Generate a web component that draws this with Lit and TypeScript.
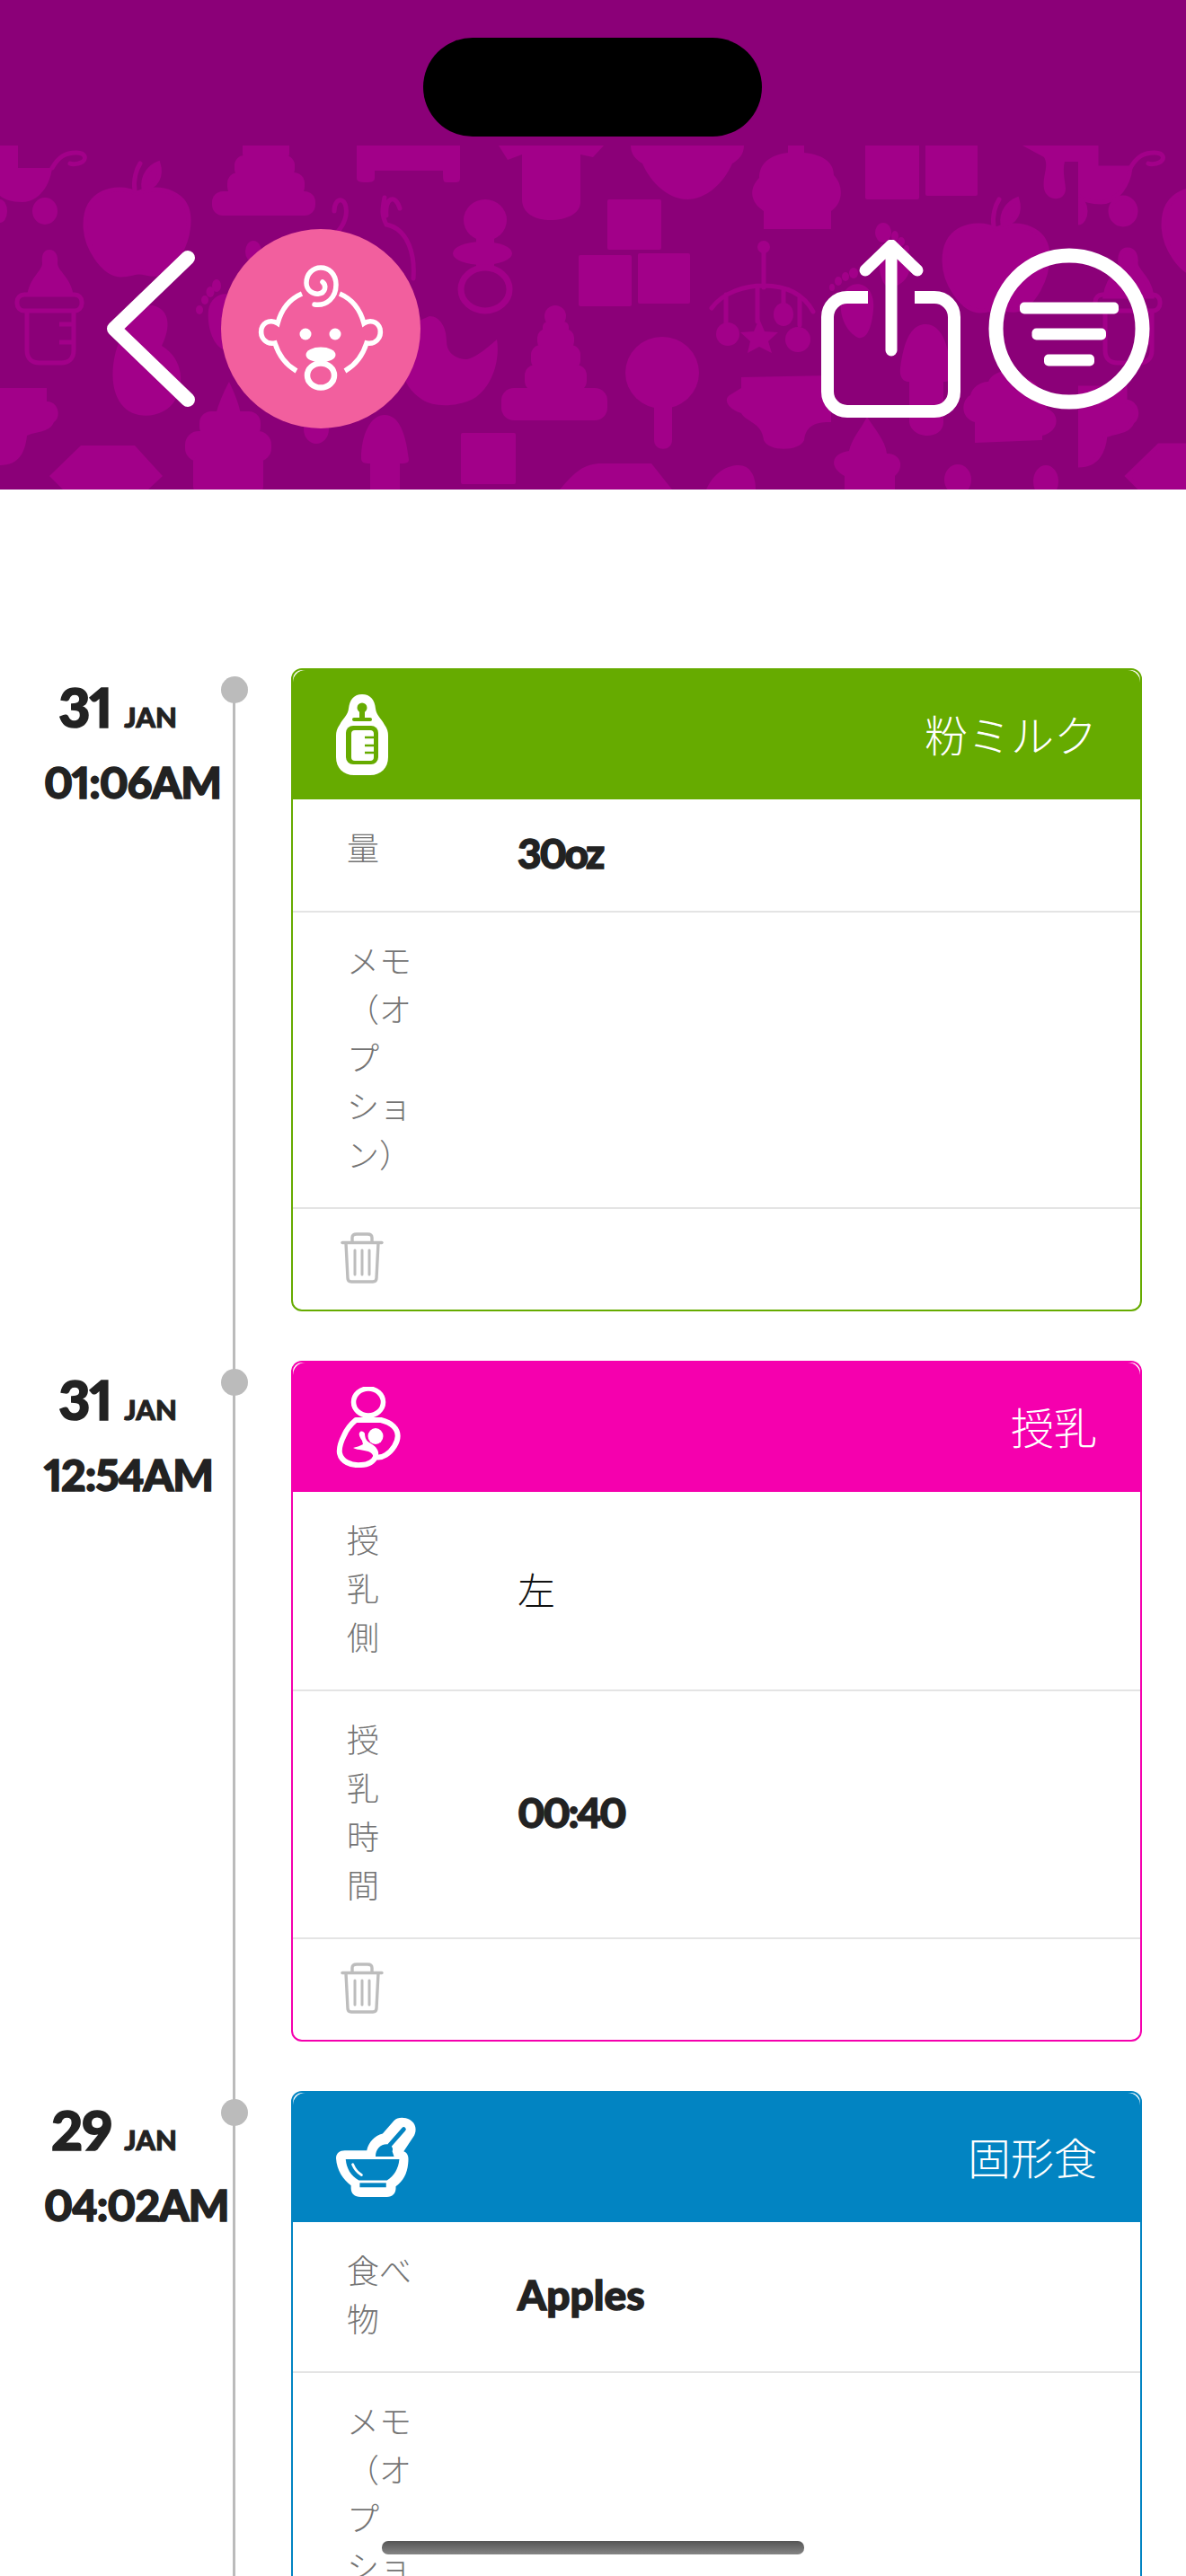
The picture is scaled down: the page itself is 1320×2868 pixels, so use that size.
import { LitElement, html, css, svg } from "lit";
import { customElement } from "lit/decorators.js";

const pattern = svg`
  <path d="M0 162H20V187H58C56 205 44 225 25 225C12 225 5 222 0 218Z"/>
  <path d="M58 187C65 175 72 170 85 170C96 170 97 178 90 181C86 183 80 183 78 182" fill="none" stroke-width="7" stroke-linecap="round"/>
  <ellipse cx="50" cy="235" rx="14" ry="15"/><ellipse cx="0" cy="235" rx="8" ry="13"/>
  <g id="apple">
    <path d="M152 215C130 205 95 212 95 250C95 275 115 306 135 306C145 306 148 303 155 303C162 303 165 306 175 305C195 300 210 270 210 245C210 215 180 205 152 215Z"/>
    <path d="M150 212C148 200 152 188 156 182" fill="none" stroke-width="5" stroke-linecap="round"/>
    <path d="M160 210C158 195 168 185 176 182C180 195 175 208 160 210Z"/>
  </g>
  <use href="#apple" transform="translate(956 40)"/>
  <rect x="270" y="155" width="52" height="24" rx="8"/><rect x="261" y="173" width="67" height="26" rx="11"/><rect x="253" y="192" width="86" height="28" rx="12"/><rect x="236" y="213" width="115" height="27" rx="12"/>
  <path d="M397 162H512V198C512 203 510 203 505 203H497C493 203 493 200 493 190H417V198C417 203 412 203 405 203C398 203 397 200 397 198Z"/>
  <path d="M555 162H672L660 175L646 172V225C646 238 630 245 613 245C596 245 581 238 581 222V172L565 178Z"/>
  <ellipse cx="540" cy="245" rx="24" ry="23"/><ellipse cx="537" cy="282" rx="33" ry="13"/>
  <path d="M530 262H550V300H530Z"/>
  <ellipse cx="540" cy="322" rx="27" ry="24" fill="none" stroke-width="7"/>
  <path d="M55 278C48 278 46 285 47 293C47 302 33 308 30 330H82C79 308 64 302 64 293C65 285 62 278 55 278Z"/>
  <rect x="19" y="328" width="72" height="18" rx="8" fill="none" stroke-width="5"/>
  <path d="M30 346V390C30 400 36 404 44 404H68C76 404 82 400 82 390V346M66 361H80M66 381H80" fill="none" stroke-width="5"/>
  <ellipse cx="222" cy="345" rx="4" ry="5"/><ellipse cx="228" cy="334" rx="4" ry="5"/><ellipse cx="234" cy="325" rx="4.5" ry="6"/><ellipse cx="241" cy="318" rx="5" ry="7"/><ellipse cx="282" cy="280" rx="9" ry="12"/>
  <path d="M232 345C235 325 260 320 265 340C270 360 262 390 252 390C238 388 230 365 232 345Z"/>
  <g fill="none" stroke-width="5" stroke-linecap="round">
    <path d="M372 235C372 218 388 218 385 240C382 255 370 265 360 270"/>
    <path d="M430 240C428 220 440 215 445 232M428 220C425 235 425 240 430 250C455 255 462 285 460 310"/>
  </g>
  <path d="M170 340C190 345 190 365 180 385C205 400 205 430 195 445C185 465 150 470 135 450C120 430 125 395 135 375C135 360 150 340 170 340Z"/>
  <path d="M478 352C490 352 497 365 497 380C497 395 510 400 520 400C530 398 545 385 553 378C556 395 552 425 530 442C515 452 485 455 470 445C455 435 445 420 450 400L460 360Z"/>
  <circle cx="618" cy="352" r="12"/><rect x="604" y="358" width="29" height="14" rx="6"/><rect x="598" y="366" width="41" height="24" rx="10"/><rect x="591" y="384" width="55" height="28" rx="11"/><rect x="584" y="406" width="69" height="30" rx="12"/><rect x="558" y="432" width="118" height="36" rx="14"/>
  <rect x="644" y="284" width="59" height="57" rx="2"/><rect x="710" y="282" width="58" height="56" rx="2"/><rect x="676" y="222" width="60" height="56" rx="2"/>
  <path d="M0 432H52V447C66 447 68 465 60 470C55 482 40 480 30 485C28 505 20 518 0 518Z"/>
  <path d="M90 496H150L181 530L165 545H70L55 530Z"/>
  <path d="M255 425C262 440 266 450 268 462H240C243 450 248 438 255 425Z"/><rect x="222" y="458" width="68" height="30" rx="13"/><rect x="206" y="480" width="96" height="34" rx="15"/><rect x="215" y="508" width="78" height="40" rx="6"/>
  <ellipse cx="352" cy="478" rx="14" ry="16"/>
  <path d="M428 462C445 462 452 485 455 512C455 516 450 516 445 516V545H412V516C405 516 402 515 402 510C402 485 412 462 428 462Z"/>
  <rect x="513" y="482" width="61" height="57" rx="2"/>
  <path d="M623 545C640 525 650 516 670 516H725L748 545Z"/>
  <ellipse cx="737" cy="415" rx="41" ry="40"/><path d="M728 445H748V490C748 503 728 503 728 490Z"/>
  <path d="M702 162H828C828 172 822 178 815 182C805 205 785 222 765 222C745 222 725 205 715 182C708 178 702 172 702 162Z"/>
  <path d="M877 162H895V170C915 172 928 180 928 195C938 205 940 225 925 235V255H850V235C835 225 833 210 845 198C845 180 860 172 877 170Z"/>
  <rect x="963" y="160" width="60" height="62" rx="2"/><rect x="1030" y="160" width="58" height="58" rx="2"/>
  <circle cx="850" cy="275" r="7"/>
  <g fill="none" stroke-width="5" stroke-linecap="round">
    <path d="M850 275V320M792 343C805 325 830 318 850 318C872 318 893 325 905 347M808 328V360M843 320V358M872 322V342M890 332V362"/>
  </g>
  <circle cx="810" cy="372" r="13"/><path d="M845 355L851 369L866 370L855 380L859 393L845 386L832 393L835 380L824 370L839 369Z"/>
  <ellipse cx="872" cy="350" rx="11" ry="13"/><ellipse cx="888" cy="378" rx="14" ry="14"/>
  <ellipse cx="983" cy="259" rx="9" ry="11"/><ellipse cx="996" cy="263" rx="4" ry="6"/><ellipse cx="1003" cy="269" rx="4" ry="5"/><ellipse cx="1009" cy="277" rx="3" ry="4"/>
  <path d="M980 272C995 270 1012 285 1012 300C1012 310 1000 320 990 320C980 320 975 290 980 272Z"/>
  <ellipse cx="926" cy="320" rx="3" ry="4"/><ellipse cx="933" cy="313" rx="4" ry="5"/><ellipse cx="941" cy="308" rx="4" ry="5"/><ellipse cx="950" cy="304" rx="5" ry="6"/>
  <path d="M937 330C945 308 975 312 972 345C970 365 965 378 955 376C942 370 932 350 937 330Z"/>
  <path d="M1138 162H1200V180H1185C1182 190 1186 205 1186 210C1186 225 1165 225 1162 210C1160 195 1168 185 1162 175Z"/>
  <path d="M1030 361C1050 361 1058 390 1058 420C1058 425 1052 425 1050 425V470C1050 490 1015 490 1012 470V425C1005 425 1001 420 1002 410C1005 385 1012 361 1030 361Z"/>
  <path d="M825 420L925 418V470C910 470 897 472 895 490C890 503 855 503 850 490C848 470 830 470 825 460C810 455 805 445 812 440L825 432Z"/>
  <path d="M1100 425C1105 412 1130 408 1140 420C1155 425 1165 440 1165 455C1180 460 1180 480 1160 485V490L1085 493V470C1068 465 1070 445 1080 440C1082 432 1090 425 1100 425Z"/>
  <path d="M965 464C975 480 985 490 987 505C1003 505 1007 520 996 530V545H940V530C922 520 925 505 945 502C948 488 958 478 965 464Z"/>
  <ellipse cx="1066" cy="534" rx="15" ry="17"/><ellipse cx="1164" cy="536" rx="14" ry="18"/>
  <path d="M786 545C795 525 810 518 822 518C835 518 841 530 841 545Z"/>
`;

const bottle = svg`<svg class="kind" width="58" height="90" viewBox="0 0 58 90">
  <path fill="#fff" d="M29 0C20 0 15 6 14 16C13 24 8 26 4 34C1 38 0 42 0 46V70C0 82 8 90 20 90H38C50 90 58 82 58 70V46C58 42 57 38 54 34C50 26 45 24 44 16C43 6 38 0 29 0Z"/>
  <g fill="#66ab00">
    <circle cx="29" cy="15" r="5.5"/><rect x="26" y="18" width="6" height="9"/><rect x="18" y="26" width="22" height="4" rx="2"/>
    <rect x="11" y="35" width="36" height="43" rx="8"/>
  </g>
  <rect x="17" y="40" width="25" height="34" rx="4" fill="#fff"/>
  <path d="M32 48H42M32 57H42M32 65H42" stroke="#66ab00" stroke-width="2.6"/>
</svg>`;

const mother = svg`<svg class="kind" width="72" height="90" viewBox="0 0 72 90">
  <ellipse cx="36" cy="17" rx="16.5" ry="15" fill="none" stroke="#fff" stroke-width="5.5"/>
  <path d="M22 37C16 42 12 47 9 54C5 62 3 68 4 74C6 83 16 88 28 87C36 87 42 83 44 78C52 80 60 74 65 66C70 58 70 50 64 44C60 40 54 38 50 37Z" fill="none" stroke="#fff" stroke-width="6" stroke-linejoin="round"/>
  <ellipse cx="44" cy="55" rx="8.5" ry="9" fill="#fff"/>
  <path fill="#fff" d="M27 50C24 52 27 57 29 60L30 64C27 66 22 67 19 68C25 71 33 70 38 73C42 75 42 80 41 83C46 82 49 75 46 70C44 66 40 64 37 62C33 60 32 55 32 52C31 50 29 49 27 50Z"/>
</svg>`;

const mortar = svg`<svg class="kind" width="90" height="90" viewBox="0 0 92 90">
  <path fill="#fff" d="M10 37H35C37 28 44 20 53 18L66 3C70 -1 78 -1 84 2C91 6 92 14 89 20L77 38C82 40 83 44 82 52C81 64 76 72 68 78V80C68 86 64 90 58 90H28C21 90 17 86 17 80V77C8 70 1 60 0 46C0 40 4 37 10 37Z"/>
  <g fill="#0284c2">
    <path d="M11 47H72C71 58 66 66 58 71H26C17 66 12 58 11 47Z"/>
    <rect x="27" y="74" width="30" height="5"/>
    <path d="M45 44C45 36 50 30 58 30C62 30 66 34 64 38L66 44Z"/>
  </g>
  <path d="M61 31L77 13" stroke="#0284c2" stroke-width="5" stroke-linecap="round"/>
  <path d="M19 53C21 58 24 62 29 65" fill="none" stroke="#fff" stroke-width="3" stroke-linecap="round"/>
</svg>`;

const trash = html`<svg width="48" height="57" viewBox="0 0 48 57" fill="none" stroke="#bdbdbd" stroke-width="3.4" stroke-linecap="round" stroke-linejoin="round">
  <path d="M2 11.5H46"/>
  <path d="M13 11V6C13 3 15 2 18 2H30C33 2 35 3 35 6V11"/>
  <path d="M6 12L8 51C8 54 10 55 12 55H36C38 55 40 54 40 51L42 12"/>
  <path d="M16 20V47M24 20V47M32 20V47" stroke-width="3"/>
</svg>`;

interface Row { label: string[]; value?: string; kind?: "cjk" | "num" | "" }
interface Entry { day: string; time: string; title: string; color: string; icon: unknown; rows: Row[] }

const memo = ["メモ", "（オ", "プ", "ショ", "ン）"];
const entries: Entry[] = [
  { day: "31", time: "01:06AM", title: "粉ミルク", color: "#66ab00", icon: bottle,
    rows: [{ label: ["量"], value: "30oz", kind: "num" }, { label: memo }] },
  { day: "31", time: "12:54AM", title: "授乳", color: "#f500ae", icon: mother,
    rows: [{ label: ["授", "乳", "側"], value: "左", kind: "cjk" }, { label: ["授", "乳", "時", "間"], value: "00:40", kind: "num" }] },
  { day: "29", time: "04:02AM", title: "固形食", color: "#0284c2", icon: mortar,
    rows: [{ label: ["食べ", "物"], value: "Apples" }, { label: memo }] },
];

@customElement("app-root")
export class AppRoot extends LitElement {
  static styles = css`
    :host { display: block; position: relative; width: 1320px; height: 2868px; overflow: hidden; background: #fff;
      font-family: "Noto Sans CJK JP", sans-serif; }
    .top { position: relative; height: 545px; box-sizing: border-box; background: #8b0078; overflow: hidden;
      display: flex; align-items: center; padding: 187px 40px 0 119px; }
    .wall { position: absolute; left: 0; top: 0; width: 1320px; height: 545px; fill: #a20089; stroke: #a20089; stroke-width: 0; }
    .wall g g, .wall path[fill="none"] { stroke-width: 5; }
    .top > svg:not(.wall) { position: relative; flex: none; }
    .avatar { position: relative; flex: none; width: 222px; height: 222px; border-radius: 50%; background: #f25f9e; margin-left: 29px; }
    .avatar svg { display: block; }
    .grow { flex: 1; }
    .filter { margin-left: 31px; }
    .island { position: absolute; left: 471px; top: 42px; width: 377px; height: 110px; border-radius: 55px; background: #000; }
    .list { padding-top: 199px; }
    .item { position: relative; display: grid; grid-template-columns: 324px 947px; margin-bottom: 55px; }
    .item::before { content: ""; position: absolute; left: 259px; top: 24px; bottom: -79px; width: 3px; background: #bbb; }
    .dot { position: absolute; left: 246px; top: 9px; width: 30px; height: 30px; border-radius: 50%; background: #bbb; }
    .when { padding-left: 49px; color: #222; font-family: Lato, "Liberation Sans", sans-serif; font-weight: 900; -webkit-text-stroke: 1.6px #222; font-variant-numeric: proportional-nums; }
    .date { width: 148px; display: flex; justify-content: flex-end; align-items: baseline; gap: 14px; line-height: 70px; margin-top: 8px; }
    .day { font-size: 61px; letter-spacing: -1px; }
    .mon { font-size: 31px; -webkit-text-stroke-width: 1px; }
    .time { font-size: 48px; line-height: 56px; margin-top: 10px; letter-spacing: -1px; white-space: nowrap; }
    .card { box-sizing: border-box; border: 2px solid; border-radius: 12px; background: #fff; }
    .head { box-sizing: border-box; height: 144px; border-radius: 14px 14px 0 0;
      display: flex; align-items: center; justify-content: space-between; padding: 0 48px; color: #fff; font-size: 48px; font-weight: 300; }
    .head span { position: relative; top: -2px; }
    .row { display: grid; grid-template-columns: 190px 1fr; align-items: center; padding: 28px 0 30px 60px; border-bottom: 2px solid #e4e4e4; min-height: 66px; }
    .label { align-self: start; margin: -3px 0 3px; font-size: 36px; line-height: 54px; color: #747474; font-weight: 300; }
    .value { font-family: Lato, "Liberation Sans", sans-serif; font-weight: 900; font-size: 46px; line-height: 64px; padding-bottom: 2px; color: #222; -webkit-text-stroke: 1.4px #222; font-variant-numeric: proportional-nums; }
    .value.num { letter-spacing: -2.5px; }
    .value.cjk { font-family: "Noto Sans CJK JP", sans-serif; font-weight: 300; font-size: 42px; -webkit-text-stroke: 0; color: #111; }
    .foot { padding: 26px 0 29px 53px; }
    .foot svg { display: block; }
    .home { position: absolute; left: 425px; top: 2829px; width: 470px; height: 15px; border-radius: 7px; background: linear-gradient(#555, #858585); }
  `;

  render() {
    return html`
      <div class="top">
        <svg class="wall" viewBox="0 0 1320 545" aria-hidden="true">
          <defs><clipPath id="tile"><rect x="0" y="162" width="1200" height="383"/></clipPath></defs>
          <g clip-path="url(#tile)">${pattern}</g>
          <g transform="translate(1200 0)"><g clip-path="url(#tile)">${pattern}</g></g>
        </svg>
        <svg width="98" height="174" viewBox="0 0 98 174" fill="none" stroke="#fff" stroke-width="16" stroke-linecap="round" stroke-linejoin="round">
          <path d="M90 8L8 87L90 166"/>
        </svg>
        <div class="avatar">
          <svg width="222" height="222" viewBox="0 0 222 222" fill="none" stroke="#fff" stroke-width="5.5" stroke-linecap="butt">
            <path stroke-linecap="round" d="M104 84C118 86 128 76 128 62C128 50 120 43 111 43C102 43 95 50 95 60C95 68 102 73 109 72C116 71 118 63 113 59"/>
            <path d="M90 72C76 78 67 90 63 105C57 101 48 102 45 111C43 121 50 129 60 127C64 140 72 151 84 158"/>
            <path d="M132 72C146 78 155 90 159 105C165 101 174 102 177 111C179 121 172 129 162 127C158 140 150 151 138 158"/>
            <g fill="#fff" stroke="none">
              <ellipse cx="94" cy="117" rx="6.5" ry="6.5"/><ellipse cx="127" cy="117" rx="6.5" ry="6.5"/>
              <ellipse cx="111" cy="140" rx="16.5" ry="8.5"/>
            </g>
            <ellipse cx="111" cy="163" rx="15" ry="13.5" stroke-width="6.5"/>
          </svg>
        </div>
        <div class="grow"></div>
        <svg width="155" height="198" viewBox="0 0 155 198" fill="none" stroke="#fff">
          <path stroke-width="14" d="M52 64H29A22 22 0 0 0 7 86V169A22 22 0 0 0 29 191H126A22 22 0 0 0 148 169V86A22 22 0 0 0 126 64H104"/>
          <path stroke-width="13" stroke-linecap="round" stroke-linejoin="round" d="M78 8V123M49 34L78 6L107 34"/>
        </svg>
        <svg class="filter" width="180" height="180" viewBox="0 0 180 180" fill="#fff">
          <circle cx="90" cy="90" r="81.5" fill="none" stroke="#fff" stroke-width="16"/>
          <rect x="35" y="60.5" width="110" height="13" rx="5"/>
          <rect x="48.5" y="89.5" width="82.5" height="13" rx="5"/>
          <rect x="62" y="118.5" width="56" height="13" rx="5"/>
        </svg>
        <div class="island"></div>
      </div>
      <div class="list">
        ${entries.map((e) => html`
          <div class="item">
            <div class="dot"></div>
            <div class="when">
              <div class="date"><span class="day">${e.day}</span><span class="mon">JAN</span></div>
              <div class="time">${e.time}</div>
            </div>
            <div class="card" style="border-color:${e.color}">
              <div class="head" style="background:${e.color}">${e.icon}<span>${e.title}</span></div>
              ${e.rows.map((r) => html`
                <div class="row">
                  <div class="label">${r.label.map((l) => html`${l}<br />`)}</div>
                  ${r.value ? html`<div class="value ${r.kind ?? ""}">${r.value}</div>` : ""}
                </div>`)}
              <div class="foot">${trash}</div>
            </div>
          </div>`)}
      </div>
      <div class="home"></div>
    `;
  }
}
